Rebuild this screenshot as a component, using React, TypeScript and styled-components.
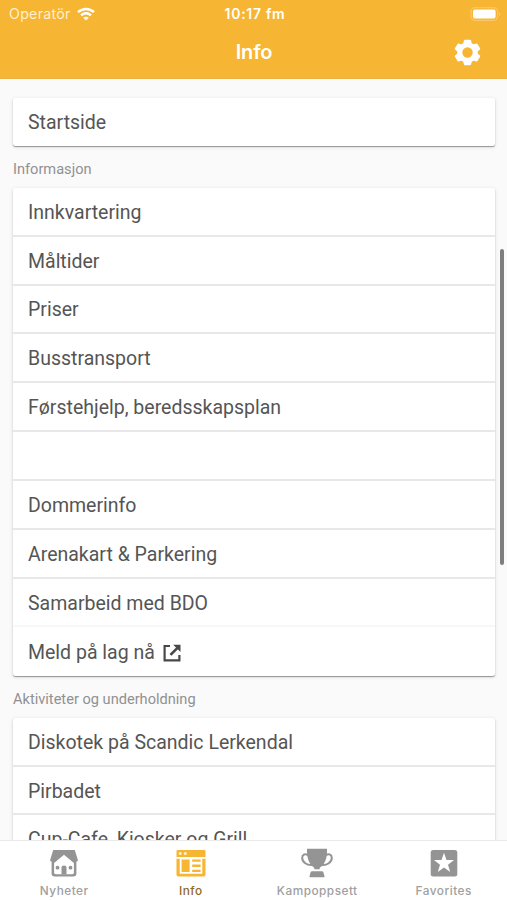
import React from "react";
import styled, { createGlobalStyle } from "styled-components";

const GlobalStyle = createGlobalStyle`
  *, *::before, *::after { box-sizing: border-box; }
  html, body { margin: 0; padding: 0; overflow: hidden; }
`;

const Screen = styled.div`
  position: relative;
  display: flex;
  flex-direction: column;
  width: 507px;
  height: 900px;
  overflow: hidden;
  background: #fafafa;
  font-family: Roboto, sans-serif;
`;

const Header = styled.header`
  flex: none;
  height: 79px;
  background: #f7b534;
  color: #fff;
  border-bottom: 1px solid #edb043;
`;

const StatusBar = styled.div`
  display: grid;
  grid-template-columns: 1fr auto 1fr;
  align-items: center;
  height: 27px;
  padding: 0 6px 0 9px;
  font-family: Inter, sans-serif;
`;

const Carrier = styled.div`
  display: flex;
  align-items: center;
  gap: 6px;
  font-size: 14.2px;
  letter-spacing: 0.28px;
  color: #fff0d0;
`;

const Clock = styled.div`
  font-size: 14px;
  font-weight: 600;
  letter-spacing: 0.7px;
`;

const BatterySlot = styled.div`
  display: flex;
  justify-content: flex-end;
`;

const TitleBar = styled.div`
  display: grid;
  grid-template-columns: 1fr auto 1fr;
  align-items: center;
  height: 50px;
  padding: 0 24px 0 25px;
`;

const Title = styled.h1`
  grid-column: 2;
  margin: 0;
  font-family: Inter, sans-serif;
  font-size: 20px;
  font-weight: 600;
  letter-spacing: -0.2px;
`;

const IconButton = styled.button`
  justify-self: end;
  display: flex;
  padding: 0;
  border: 0;
  background: none;
  color: #fff;
`;

const Content = styled.main`
  flex: 1;
  min-height: 0;
  overflow: hidden;
  padding: 18.5px 12px 0 13px;
`;

const SectionLabel = styled.h2`
  display: flex;
  align-items: center;
  height: 41.5px;
  margin: 0;
  padding-top: 3px;
  font-size: 14.6px;
  font-weight: 400;
  color: #919191;
`;

const Card = styled.section`
  overflow: hidden;
  border-radius: 2.5px;
  background: #fff;
  box-shadow: 0 1px 1px rgba(0, 0, 0, 0.36), 0 1px 4px rgba(0, 0, 0, 0.12);
`;

const Row = styled.div<{ $line?: "soft" | "none" }>`
  display: flex;
  align-items: center;
  gap: 8px;
  height: 48.85px;
  padding: 2px 15px 0;
  font-size: 19.5px;
  color: #555;
  border-bottom: ${(p) =>
    p.$line === "none" ? "0" : p.$line === "soft" ? "2px solid #f7f7f7" : "2px solid #e8e8e8"};
`;

const ScrollThumb = styled.div`
  position: absolute;
  top: 249px;
  right: 3px;
  width: 4px;
  height: 316px;
  border-radius: 2px;
  background: #7e7e7e;
`;

const TabBar = styled.nav`
  flex: none;
  display: grid;
  grid-template-columns: repeat(4, 1fr);
  height: 60px;
  border-top: 1px solid #e9e9e9;
  background: #fff;
  padding-left: 1px;
`;

const Tab = styled.div<{ $active?: boolean }>`
  display: flex;
  flex-direction: column;
  align-items: center;
  padding-top: 7px;
  gap: 5px;
  color: ${(p) => (p.$active ? "#f7b534" : "#949494")};
`;

const TabLabel = styled.span<{ $active?: boolean }>`
  font-family: Inter, sans-serif;
  font-size: 11.8px;
  line-height: 16px;
  font-weight: 500;
  letter-spacing: 0.5px;
  color: ${(p) => (p.$active ? "#8e6a24" : "#a0a0a0")};
`;

const WifiIcon = () => (
  <svg width="18" height="14" viewBox="0 0 18 14" fill="none" stroke="#fff" strokeWidth="2.5">
    <path d="M1 5.2C5.5.9 12.500.9 17 5.200" />
    <path d="M4.100 8.300c2.800-2.600 7-2.600 9.800 0" />
    <path d="M9 13.500 6.200 10.700c1.600-1.400 4-1.400 5.600 0z" fill="#fff" stroke="none" />
  </svg>
);

const BatteryIcon = () => (
  <svg width="31" height="14" viewBox="0 0 31 14">
    <rect x="1" y=".7" width="26.600" height="12.600" rx="4" fill="none" stroke="#fac768" strokeWidth="1.300" />
    <rect x="3" y="2.600" width="22.600" height="8.800" rx="2" fill="#fff" />
    <path d="M29 4.800c1.700.7 1.700 3.700 0 4.400z" fill="#fac768" />
  </svg>
);

const GearIcon = () => (
  <svg width="31" height="31" viewBox="0 0 31 31">
    <g fill="currentColor" transform="translate(15.500 15.500)">
      <path
        fillRule="evenodd"
        stroke="currentColor"
        strokeWidth="2"
        strokeLinejoin="round"
        d="M-2.600-11.800h5.200l.8 3.200 2.500 1.500 3.200-1 2.600 4.400-2.400 2.300v2.800l2.400 2.300-2.600 4.400-3.200-1-2.500 1.500-.8 3.200h-5.200l-.8-3.200-2.500-1.500-3.200 1-2.600-4.400 2.400-2.300v-2.800l-2.400-2.300 2.600-4.400 3.200 1 2.500-1.500zM0-6.200a6.200 6.200 0 1 0 0 12.400 6.200 6.200 0 0 0 0-12.400z"
      />
    </g>
  </svg>
);

const ExternalIcon = () => (
  <svg width="18" height="18" viewBox="0 0 18 18" fill="none" stroke="#484848" strokeWidth="2.200">
    <path d="M7 2H1.600v14.400h14.800V11" />
    <path d="M7.500 10.800 15 3.300" strokeWidth="2.600" />
    <path d="M10.200.8H17.500v7.300z" fill="#484848" stroke="none" />
  </svg>
);

const HouseIcon = () => (
  <svg width="30" height="30" viewBox="0 0 30 30" fill="currentColor">
    <path d="M4.200 2h21.600l3.200 10.500-1.600 1.200V25.500q0 3-3 3H5.600q-3 0-3-3V13.700L1 12.500z" />
    <path d="M15 6.700 24.900 15v9.600q0 1.600-1.600 1.600H6.700q-1.600 0-1.600-1.600V15z" fill="#fff" />
    <path d="M12.500 26.500v-7q0-2 2.500-2t2.500 2v7z" />
    <circle cx="8.500" cy="19.700" r="1.900" />
    <circle cx="21.500" cy="19.700" r="1.900" />
  </svg>
);

const BrowserIcon = () => (
  <svg width="30" height="30" viewBox="0 0 30 30" fill="currentColor">
    <path d="M1.800 2h26.400q1.300 0 1.300 1.400V9H.5V3.400Q.5 2 1.800 2z" />
    <path d="M.5 10.700h3.200v15h22.600v-15h3.200v16q0 1.800-1.800 1.800H2.300q-1.800 0-1.800-1.800z" />
    <path d="M5.600 11.500h8v12.500h-8zM16.200 11.500H24.600v2.300h-8.400zM16.200 16.600H24.600v2.300h-8.400zM16.200 21.700H24.600v2.300h-8.400z" />
    <circle cx="4.200" cy="5.600" r="1.500" fill="#fff1ce" />
    <circle cx="9.300" cy="5.600" r="1.500" fill="#fff1ce" />
  </svg>
);

const TrophyIcon = () => (
  <svg width="32" height="30" viewBox="0 0 32 30" fill="currentColor">
    <path d="M6 .7h20v3c0 7.500-2.700 13-7.700 16.300h-4.600C8.700 16.700 6 11.200 6 3.700z" />
    <path
      d="M7 7C3.500 5.300 1.200 7 1.200 10c0 4 4.600 7.700 10.300 7M25 7c3.500-1.700 5.800 0 5.800 3 0 4-4.600 7.700-10.300 7"
      fill="none"
      stroke="currentColor"
      strokeWidth="2"
    />
    <path d="M13.300 19h5.400v2.200h-5.400zM11 23.300h10q1 0 1.400 1l1.100 4q.3 1-.8 1H9.300q-1.100 0-.8-1l1.100-4q.4-1 1.400-1z" />
  </svg>
);

const FavoriteIcon = () => (
  <svg width="28" height="30" viewBox="0 0 28 30">
    <rect x=".7" y="2" width="26.600" height="26.500" rx="2.500" fill="currentColor" />
    <path d="m14 4.800 2.500 7.100 7.500.2-6 4.600 2.200 7.200-6.200-4.300-6.200 4.300 2.200-7.200-6-4.600 7.500-.2z" fill="#fff" />
  </svg>
);

const infoRows = [
  "Innkvartering",
  "Måltider",
  "Priser",
  "Busstransport",
  "Førstehjelp, beredsskapsplan",
  "",
  "Dommerinfo",
  "Arenakart & Parkering",
];

const tabs = [
  { label: "Nyheter", Icon: HouseIcon },
  { label: "Info", Icon: BrowserIcon, active: true },
  { label: "Kampoppsett", Icon: TrophyIcon },
  { label: "Favorites", Icon: FavoriteIcon },
];

export default function App() {
  return (
    <>
      <GlobalStyle />
      <Screen>
        <Header>
          <StatusBar>
            <Carrier>
              Operatör
              <WifiIcon />
            </Carrier>
            <Clock>10:17 fm</Clock>
            <BatterySlot>
              <BatteryIcon />
            </BatterySlot>
          </StatusBar>
          <TitleBar>
            <Title>Info</Title>
            <IconButton aria-label="Settings">
              <GearIcon />
            </IconButton>
          </TitleBar>
        </Header>
        <Content>
          <Card>
            <Row $line="none">Startside</Row>
          </Card>
          <SectionLabel>Informasjon</SectionLabel>
          <Card>
            {infoRows.map((text, i) => (
              <Row key={i}>{text}</Row>
            ))}
            <Row $line="soft">Samarbeid med BDO</Row>
            <Row $line="none">
              Meld på lag nå
              <ExternalIcon />
            </Row>
          </Card>
          <SectionLabel>Aktiviteter og underholdning</SectionLabel>
          <Card>
            <Row>Diskotek på Scandic Lerkendal</Row>
            <Row>Pirbadet</Row>
            <Row>Cup-Cafe, Kiosker og Grill</Row>
          </Card>
        </Content>
        <TabBar>
          {tabs.map(({ label, Icon, active }) => (
            <Tab key={label} $active={active}>
              <Icon />
              <TabLabel $active={active}>{label}</TabLabel>
            </Tab>
          ))}
        </TabBar>
        <ScrollThumb />
      </Screen>
    </>
  );
}
